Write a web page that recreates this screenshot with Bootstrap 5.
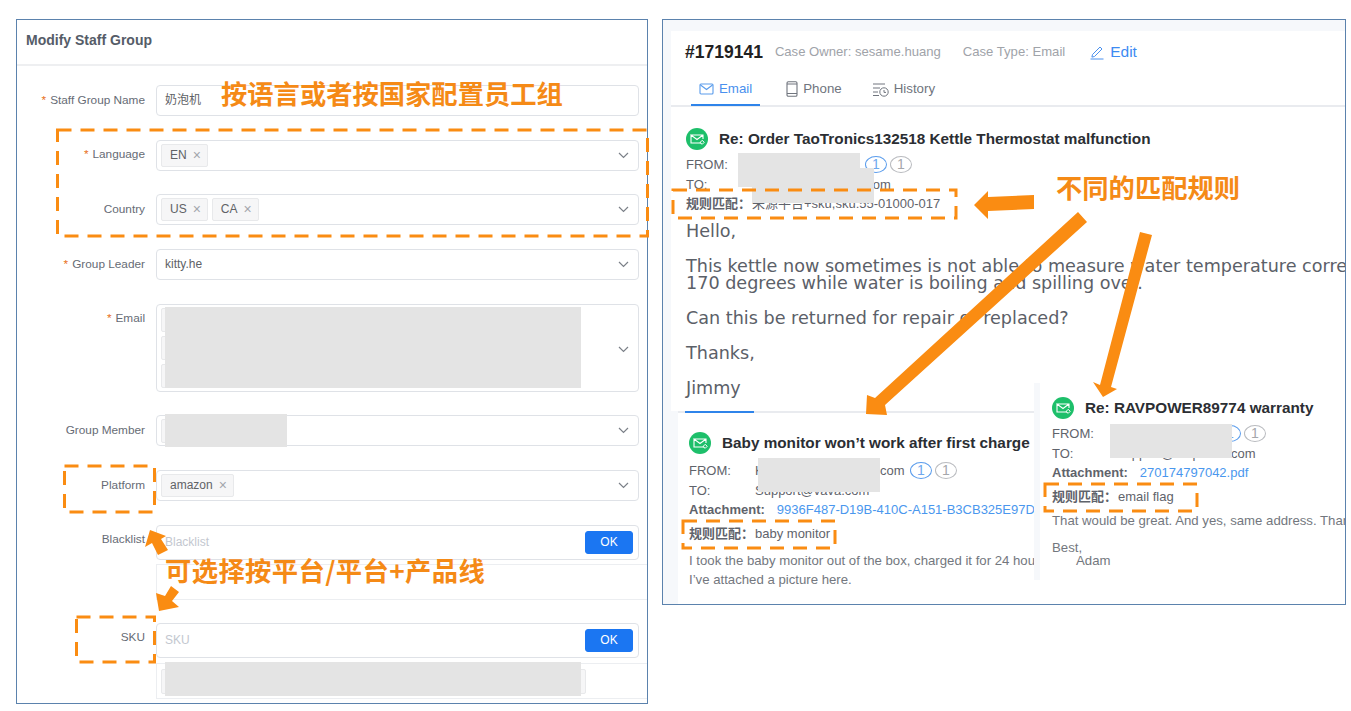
<!DOCTYPE html>
<html lang="en">
<head>
  <meta charset="UTF-8">
  <title>Modify Staff Group</title>
  <link href="https://cdn.jsdelivr.net/npm/bootstrap@5.3.2/dist/css/bootstrap.min.css" rel="stylesheet">
  <style>
    body { margin: 0; background: #fff; font-family: "Liberation Sans", "Noto Sans CJK SC", sans-serif; font-size: 12px; color: #606266; overflow: hidden; }
    .sheet { position: relative; width: 1351px; height: 711px; padding: 19px 0 0 16px; gap: 14px; overflow: hidden; }

    /* left panel */
    .staff-panel { width: 632px; height: 685px; border: 1px solid #5b82ad; border-radius: 0; overflow: hidden; flex: none; }
    .staff-panel .card-header { height: 46px; padding: 0 9px; background: #fff; border-bottom: 2px solid #eeeff1; border-radius: 0; font-size: 14px; font-weight: 700; color: #555c68; line-height: 40px; }
    .staff-body { padding: 19px 0 0 0; }
    .form-line { margin-bottom: 23.7px; }
    .form-line .field-label { width: 129px; padding-right: 1px; padding-top: 6.5px; text-align: right; flex: none; white-space: nowrap; color: #666b75; font-size: 11.8px; }
    .req { color: #e8701a; margin-right: 4px; }
    .field-box { width: 483px; height: 31px; margin-left: 10px; flex: none; padding: 0 4px; border: 1px solid #dfe2e7; border-radius: 4px; box-shadow: none; font-size: 12px; color: #606266; }
    .field-plain { padding-left: 8px; line-height: 29px; }
    .box-tall { height: 88px; align-items: flex-start; padding-top: 3px; }
    .box-input { height: 35px; padding: 0 5px 0 8px; color: #c3c7cf; }
    .chevron { width: 11px; height: 7px; flex: none; margin-right: 5px; }
    .tag-chip { height: 23px; padding: 0 6px 0 8px; background: #f6f6f7; border: 1px solid #e8e9eb; border-radius: 2px; line-height: 21px; gap: 6px; }
    .tag-chip i { font-style: normal; color: #a3a6ad; font-size: 14px; line-height: 20px; }
    .ghost-chip { width: 199px; height: 24px; background: #f6f6f7; border: 1px solid #e8e9eb; border-radius: 2px; }
    .ghost-small { width: 120px; }
    .ok-btn { width: 48px; height: 23px; padding: 0; font-size: 12px; line-height: 21px; background: #1b76f2; border-color: #1b76f2; border-radius: 3px; }
    .sub-box { height: 36px; margin: -19.7px 0 23px 139px; border: 1px solid #eceef1; border-right: 0; }
    .sub-box-last { height: 36px; margin: -19px 0 0 139px; padding: 5px 0 0 4px; }
    .sub-chip { width: 425px; height: 25px; background: #f6f6f7; border: 1px solid #e8e9eb; border-radius: 2px; }

    /* right panel */
    .case-panel { position: relative; width: 684px; height: 586px; flex: none; padding: 11px 0 0 8px; background: #f6f8fb; border: 1px solid #5b82ad; overflow: hidden; }
    .case-main { height: 100%; background: #fff; }
    .case-head { height: 41px; padding: 0 0 0 14px; line-height: 22px; white-space: nowrap; }
    .case-id { font-size: 17.5px; font-weight: 700; color: #222; margin-right: 12px; }
    .case-meta { font-size: 13.1px; color: #a0a3a9; margin-right: 22px; }
    .case-edit { font-size: 15.5px; color: #3d8bf2; margin-left: 2px; gap: 5px; }
    .case-tabs { height: 35px; padding-left: 20px; border-bottom: 2px solid #e9ebef; gap: 0; }
    .case-tabs .nav-link { height: 34px; padding: 8px 8px 0; margin-right: 14px; font-size: 13.3px; color: #70757e; border-bottom: 2px solid transparent; display: flex; align-items: flex-start; gap: 5px; line-height: 18px; }
    .case-tabs .nav-link.active { margin-right: 18px; color: #4a90ee; border-bottom-color: #2f84ea; }
    .mail-main { padding: 22px 0 0 15px; white-space: nowrap; }
    .mail-title { height: 20px; margin-bottom: 6px; gap: 11px; font-size: 15.3px; font-weight: 700; color: #2b2e33; line-height: 20px; }
    .mail-title svg { flex: none; margin-top: -1px; }
    .meta-row { height: 19.5px; line-height: 19.5px; font-size: 13px; color: #5f636b; }
    .meta-key { width: 66px; flex: none; font-weight: 400; }
    .meta-row .attach-key { width: auto; font-weight: 700; margin-right: 12px; }
    .rule-key { width: 66px; font-weight: 700; flex: none; }
    .mail-link { color: #4a97ee; }
    .count-dot { width: 22px; height: 17px; margin: 1px 0 0 3px; border: 1px solid #b9bbbf; border-radius: 50%; font-size: 14px; line-height: 15px; text-align: center; color: #a5a7ab; flex: none; }
    .count-on { color: #6ea8ee; border-color: #5a9cec; }
    .from-top { width: 110px; }
    .from-baby { width: 152px; }
    .from-rav { width: 98px; }
    .mail-text { margin-top: 9px; font-family: "DejaVu Sans", sans-serif; font-size: 17.6px; line-height: 17px; color: #5b6068; }
    .mail-text p { margin: 0 0 18px; }

    .over-card { position: absolute; background: #fff; overflow: hidden; white-space: nowrap; }
    .over-baby { left: 6px; top: 391px; width: 365px; height: 193px; padding: 0; border-left: 9px solid #f6f8fb; }
    .baby-line { height: 2px; background: #e9ebef; }
    .baby-line span { display: block; width: 69px; height: 2px; margin-left: 7px; background: #2f84ea; }
    .over-baby .over-inner { padding: 20px 0 0 11px; }
    .over-baby .mail-title { margin-bottom: 8px; }
    .over-rav { left: 371px; top: 363px; width: 312px; height: 197px; padding: 15px 0 0 12px; border-left: 6px solid #f6f8fb; }
    .over-foot { font-size: 13.2px; line-height: 19px; color: #73777e; margin-top: 8px; }
    .over-rav .over-foot { margin-top: 5px; }
    .sign-off { line-height: 13px; margin-top: -8px; }

    /* annotations on top of everything */
    .mask { position: absolute; background: #e4e4e4; }
    .note-text { position: absolute; font-family: "Noto Sans CJK SC", sans-serif; font-size: 26.3px; font-weight: 700; line-height: 32px; color: #f58a16; white-space: nowrap; }
    .note-wide { letter-spacing: .4px; }
    .note-layer { position: absolute; left: 0; top: 0; }
  </style>
</head>
<body>
  <div class="sheet d-flex align-items-start">

    <div class="card staff-panel">
      <div class="card-header">Modify Staff Group</div>
      <div class="staff-body">
        <div class="form-line d-flex">
          <label class="field-label"><span class="req">*</span>Staff Group Name</label>
          <div class="form-control field-box field-plain">奶泡机</div>
        </div>
        <div class="form-line d-flex">
          <label class="field-label"><span class="req">*</span>Language</label>
          <div class="form-control field-box d-flex align-items-center justify-content-between">
            <div class="d-flex gap-1"><span class="tag-chip d-flex">EN <i>×</i></span></div>
            <svg class="chevron" viewBox="0 0 11 7"><path d="M1 1l4.5 4.5L10 1" fill="none" stroke="#7b8088" stroke-width="1.2"/></svg>
          </div>
        </div>
        <div class="form-line d-flex">
          <label class="field-label">Country</label>
          <div class="form-control field-box d-flex align-items-center justify-content-between">
            <div class="d-flex gap-1"><span class="tag-chip d-flex">US <i>×</i></span><span class="tag-chip d-flex">CA <i>×</i></span></div>
            <svg class="chevron" viewBox="0 0 11 7"><path d="M1 1l4.5 4.5L10 1" fill="none" stroke="#7b8088" stroke-width="1.2"/></svg>
          </div>
        </div>
        <div class="form-line d-flex">
          <label class="field-label"><span class="req">*</span>Group Leader</label>
          <div class="form-control field-box field-plain d-flex align-items-center justify-content-between pe-1">
            <span>kitty.he</span>
            <svg class="chevron" viewBox="0 0 11 7"><path d="M1 1l4.5 4.5L10 1" fill="none" stroke="#7b8088" stroke-width="1.2"/></svg>
          </div>
        </div>
        <div class="form-line d-flex">
          <label class="field-label"><span class="req">*</span>Email</label>
          <div class="form-control field-box box-tall d-flex justify-content-between">
            <div class="d-flex flex-column gap-1">
              <span class="ghost-chip"></span><span class="ghost-chip"></span><span class="ghost-chip"></span>
            </div>
            <svg class="chevron align-self-center" viewBox="0 0 11 7"><path d="M1 1l4.5 4.5L10 1" fill="none" stroke="#7b8088" stroke-width="1.2"/></svg>
          </div>
        </div>
        <div class="form-line d-flex">
          <label class="field-label">Group Member</label>
          <div class="form-control field-box d-flex align-items-center justify-content-between">
            <span class="ghost-chip ghost-small"></span>
            <svg class="chevron" viewBox="0 0 11 7"><path d="M1 1l4.5 4.5L10 1" fill="none" stroke="#7b8088" stroke-width="1.2"/></svg>
          </div>
        </div>
        <div class="form-line d-flex">
          <label class="field-label">Platform</label>
          <div class="form-control field-box d-flex align-items-center justify-content-between">
            <div class="d-flex gap-1"><span class="tag-chip d-flex">amazon <i>×</i></span></div>
            <svg class="chevron" viewBox="0 0 11 7"><path d="M1 1l4.5 4.5L10 1" fill="none" stroke="#7b8088" stroke-width="1.2"/></svg>
          </div>
        </div>
        <div class="form-line d-flex">
          <label class="field-label">Blacklist</label>
          <div class="form-control field-box box-input d-flex align-items-center justify-content-between">
            <span>Blacklist</span>
            <button class="btn btn-primary ok-btn" type="button">OK</button>
          </div>
        </div>
        <div class="sub-box"></div>
        <div class="form-line d-flex">
          <label class="field-label">SKU</label>
          <div class="form-control field-box box-input d-flex align-items-center justify-content-between">
            <span>SKU</span>
            <button class="btn btn-primary ok-btn" type="button">OK</button>
          </div>
        </div>
        <div class="sub-box sub-box-last"><div class="sub-chip"></div></div>
      </div>
    </div>

    <div class="case-panel">
      <div class="case-main">
        <div class="case-head d-flex align-items-center">
          <span class="case-id">#1719141</span>
          <span class="case-meta">Case Owner: sesame.huang</span>
          <span class="case-meta">Case Type: Email</span>
          <span class="case-edit d-flex align-items-center">
            <svg width="16" height="16" viewBox="0 0 16 16" fill="none" stroke="#4a90ee" stroke-width="1"><path d="M3.5 10.5L11 3l2 2-7.5 7.5-2.6.6zM1.5 15h13"/></svg>
            Edit
          </span>
        </div>
        <ul class="nav case-tabs">
          <li class="nav-item"><a class="nav-link active" href="#">
            <svg width="15" height="14" viewBox="0 0 15 14" fill="none" stroke="#5a9cec" stroke-width="1.1" style="margin-top:2px"><rect x="1" y="2" width="13" height="10" rx="1"/><path d="M1.5 3l6 4.5 6-4.5"/></svg>Email</a></li>
          <li class="nav-item"><a class="nav-link" href="#">
            <svg width="12" height="16" viewBox="0 0 12 16" fill="none" stroke="#70757e" stroke-width="1.1" style="margin-top:1px"><rect x="1" y=".8" width="10" height="14.4" rx="1.3"/><path d="M1 3h10M1 12.5h10"/></svg>Phone</a></li>
          <li class="nav-item"><a class="nav-link" href="#">
            <svg width="17" height="15" viewBox="0 0 17 15" fill="none" stroke="#70757e" stroke-width="1" style="margin-top:2px"><path d="M1 2h12M1 6h7M1 10h5M1 13.5h6"/><circle cx="12" cy="10" r="4.2"/><path d="M12 8v2.4h2"/></svg>History</a></li>
        </ul>
        <div class="mail-main">
          <div class="mail-title d-flex">
            <svg width="22" height="22" viewBox="0 0 22 22"><circle cx="11" cy="11" r="11" fill="#1dbf6a"/><path d="M5 7h12v4M15 15H5V7l6 4.5L17 7" fill="none" stroke="#fff" stroke-width="1.1"/><path d="M14 14.5l2.2-2.2 2 2-2 2z" fill="none" stroke="#fff" stroke-width="1"/></svg>
            Re: Order TaoTronics132518 Kettle Thermostat malfunction
          </div>
          <div class="meta-row d-flex"><span class="meta-key">FROM:</span><span class="from-top">jane@vava.com</span><span class="count-dot count-on">1</span><span class="count-dot">1</span></div>
          <div class="meta-row d-flex"><span class="meta-key">TO:</span><span>service@taotronics.com</span></div>
          <div class="meta-row d-flex"><span class="rule-key">规则匹配：</span><span>来源平台+sku,sku:55-01000-017</span></div>
          <div class="mail-text">
            <p>Hello,</p>
            <p>This kettle now sometimes is not able to measure water temperature correctly. It shows<br>170 degrees while water is boiling and spilling over.</p>
            <p>Can this be returned for repair or replaced?</p>
            <p>Thanks,</p>
            <p>Jimmy</p>
          </div>
        </div>
      </div>

      <div class="over-card over-baby">
        <div class="baby-line"><span></span></div>
        <div class="over-inner">
          <div class="mail-title d-flex">
            <svg width="22" height="22" viewBox="0 0 22 22"><circle cx="11" cy="11" r="11" fill="#1dbf6a"/><path d="M5 7h12v4M15 15H5V7l6 4.5L17 7" fill="none" stroke="#fff" stroke-width="1.1"/><path d="M14 14.5l2.2-2.2 2 2-2 2z" fill="none" stroke="#fff" stroke-width="1"/></svg>
            Baby monitor won’t work after first charge
          </div>
          <div class="meta-row d-flex"><span class="meta-key">FROM:</span><span class="from-baby">Kelly.brown01@vava.com</span><span class="count-dot count-on">1</span><span class="count-dot">1</span></div>
          <div class="meta-row d-flex"><span class="meta-key">TO:</span><span>Support@vava.com</span></div>
          <div class="meta-row d-flex"><span class="attach-key">Attachment:</span><span class="mail-link">9936F487-D19B-410C-A151-B3CB325E97D</span></div>
          <div class="meta-row d-flex mt-1"><span class="rule-key">规则匹配：</span><span>baby monitor</span></div>
          <div class="over-foot">I took the baby monitor out of the box, charged it for 24 hours<br>I’ve attached a picture here.</div>
        </div>
      </div>

      <div class="over-card over-rav">
        <div class="mail-title d-flex">
          <svg width="22" height="22" viewBox="0 0 22 22"><circle cx="11" cy="11" r="11" fill="#1dbf6a"/><path d="M5 7h12v4M15 15H5V7l6 4.5L17 7" fill="none" stroke="#fff" stroke-width="1.1"/><path d="M14 14.5l2.2-2.2 2 2-2 2z" fill="none" stroke="#fff" stroke-width="1"/></svg>
          Re: RAVPOWER89774 warranty
        </div>
        <div class="meta-row d-flex"><span class="meta-key">FROM:</span><span class="from-rav">adam@vava.com</span><span class="count-dot count-on">1</span><span class="count-dot">1</span></div>
        <div class="meta-row d-flex"><span class="meta-key">TO:</span><span>support@ravpower.com</span></div>
        <div class="meta-row d-flex"><span class="attach-key">Attachment:</span><span class="mail-link">270174797042.pdf</span></div>
        <div class="meta-row d-flex mt-1"><span class="rule-key">规则匹配：</span><span>email flag</span></div>
        <div class="over-foot">That would be great. And yes, same address. Thanks<br><br><div class="sign-off">Best,<br><span class="ms-4">Adam</span></div></div>
      </div>
    </div>

    <!-- redactions and orange notes sit over the two panels -->
    <div class="mask" style="left:165px;top:307px;width:416px;height:81px"></div>
    <div class="mask" style="left:165px;top:414px;width:122px;height:33px"></div>
    <div class="mask" style="left:165px;top:662px;width:416px;height:34px"></div>
    <div class="mask" style="left:738px;top:153px;width:122px;height:34px"></div>
    <div class="mask" style="left:752px;top:168px;width:122px;height:35px"></div>
    <div class="mask" style="left:758px;top:458px;width:122px;height:34px"></div>
    <div class="mask" style="left:1110px;top:424px;width:122px;height:34px"></div>

    <svg class="note-layer" width="1351" height="711" viewBox="0 0 1351 711">
      <g fill="none" stroke="#fa8c12" stroke-width="3" stroke-dasharray="14 9">
        <rect x="57.5" y="130" width="590" height="106"/>
        <rect x="64.5" y="466" width="90" height="46"/>
        <rect x="76.5" y="617" width="78" height="45"/>
        <rect x="673" y="190" width="283" height="28"/>
        <rect x="683" y="521" width="152" height="27"/>
        <rect x="1045" y="484" width="152" height="27"/>
      </g>
      <g fill="#fa8c12">
        <polygon points="974,205 988,191 988,197 1034,195 1034,209 988,211 988,219"/>
        <polygon points="1078,212 1087,222 885,405 887,415 866,414 867,395 875,398"/>
        <polygon points="1140,232 1152,235 1111,387 1117,389 1103,397 1093,382 1100,385"/>
        <polygon points="150,530 166,536 161,539 168,550 158,555 152,543 145,547"/>
        <polygon points="159,611 156,593 165,596 171,586 179,592 172,601 179,607"/>
      </g>
    </svg>
    <div class="note-text" style="left:221px;top:77px">按语言或者按国家配置员工组</div>
    <div class="note-text" style="left:1056px;top:171px">不同的匹配规则</div>
    <div class="note-text note-wide" style="left:165px;top:554px">可选择按平台/平台+产品线</div>
  </div>
  <script src="https://cdn.jsdelivr.net/npm/bootstrap@5.3.2/dist/js/bootstrap.bundle.min.js"></script>
</body>
</html>
